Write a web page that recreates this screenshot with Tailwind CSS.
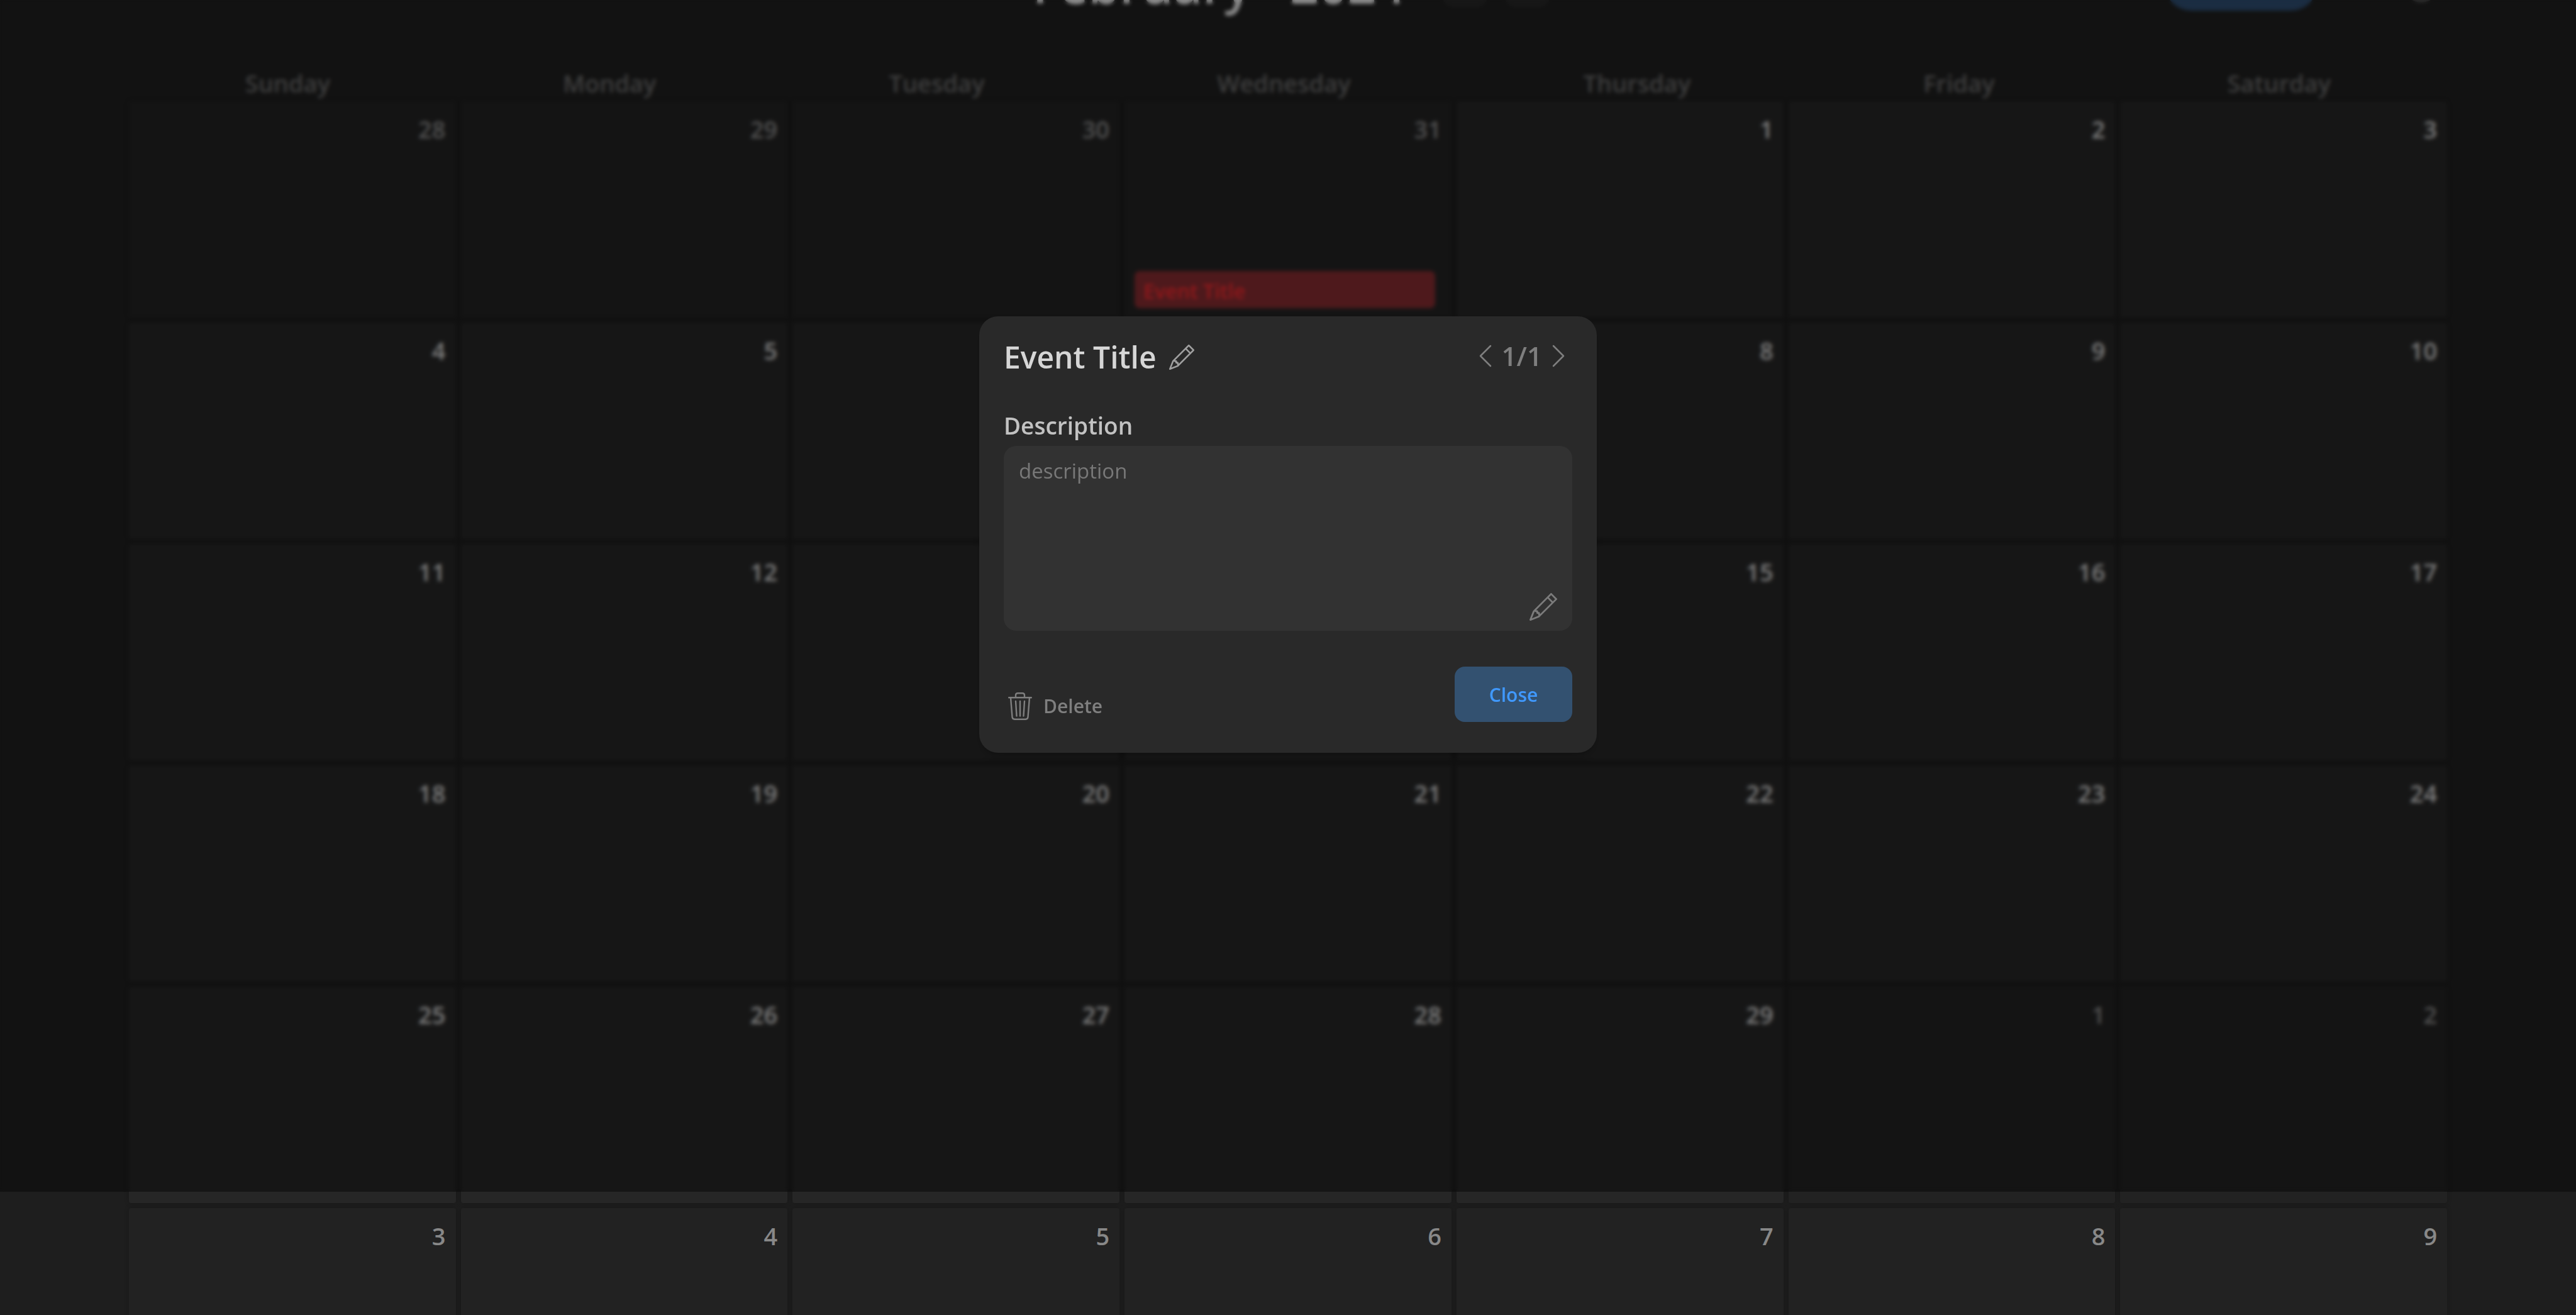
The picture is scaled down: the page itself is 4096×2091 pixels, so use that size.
<!DOCTYPE html>
<html lang="en">
<head>
<meta charset="utf-8">
<title>Calendar</title>
<script src="https://cdn.jsdelivr.net/npm/@tailwindcss/browser@4"></script>
</head>
<body class="relative h-screen overflow-hidden bg-[#1e1e1e] font-['Segoe_UI','Open_Sans',sans-serif] font-semibold">
<svg class="hidden">
  <symbol id="pencil" viewBox="0 0 16 16"><path fill="currentColor" d="M12.146.146a.5.5 0 0 1 .708 0l3 3a.5.5 0 0 1 0 .708l-10 10a.5.5 0 0 1-.168.11l-5 2a.5.5 0 0 1-.65-.65l2-5a.5.5 0 0 1 .11-.168zM11.207 2.5 13.5 4.793 14.793 3.5 12.5 1.207zm1.586 3L10.500 3.207 4 9.707V10h.5a.5.5 0 0 1 .5.5v.5h.5a.5.5 0 0 1 .5.5v.5h.293zm-9.761 5.175-.106.106-1.528 3.821 3.821-1.528.106-.106A.5.5 0 0 1 5 12.500V12h-.5a.5.5 0 0 1-.5-.5V11h-.5a.5.5 0 0 1-.468-.325"/></symbol>
</svg>

<header class="mx-[5%] -mt-[90px] grid h-[130px] grid-cols-[1fr_auto_1fr] items-center">
  <span></span>
  <div class="flex items-center pl-2.5">
    <h1 class="flex gap-[62px] text-[80px] leading-[106px] text-[#e8e8e8]"><span>February</span><span>2024</span></h1>
    <div class="ml-[60px] flex gap-7">
      <button aria-label="Previous month" class="size-[71px] rounded-2xl bg-[#272727]"></button>
      <button aria-label="Next month" class="size-[71px] rounded-2xl bg-[#272727]"></button>
    </div>
  </div>
  <div class="flex items-center justify-end gap-[136px] pr-3">
    <button aria-label="Add event" class="h-[84px] w-[243px] rounded-full bg-[#2d4b6e]"></button>
    <button aria-label="Settings" class="size-[58px] rounded-full bg-[#4c4c4c]"></button>
  </div>
</header>

<main class="mx-[5%]">
  <div id="weekdays" class="flex h-[121px] items-end justify-around pb-[3px] text-[38px] leading-[52px] text-[#686868]"></div>
  <div id="days" class="grid grid-cols-7 gap-2"></div>
</main>

<div class="absolute inset-x-0 top-0 bottom-[196px] flex items-start justify-center bg-black/40 pt-[503px] backdrop-blur-[3px]">
  <section role="dialog" aria-labelledby="event-title" class="w-[982px] rounded-[30px] bg-[#292929] px-[39px] pt-[33px] pb-[49px] shadow-lg shadow-black/20">
    <div class="flex items-start justify-between">
      <div class="flex items-center gap-5">
        <h2 id="event-title" class="text-[48px] leading-[64px] text-[#d6d6d6]">Event Title</h2>
        <button aria-label="Edit title" class="text-[#a0a0a0]"><svg class="size-10"><use href="#pencil"/></svg></button>
      </div>
      <div class="flex items-center gap-4 pr-3 text-[42px] leading-[60px] text-[#7f7f7f]">
        <button aria-label="Previous event"><svg class="h-9 w-5" viewBox="0 0 20 36" fill="none" stroke="currentColor" stroke-width="2.500" stroke-linecap="round" stroke-linejoin="round"><path d="M18 2 2 18l16 16"/></svg></button>
        <span>1/1</span>
        <button aria-label="Next event"><svg class="h-9 w-5" viewBox="0 0 20 36" fill="none" stroke="currentColor" stroke-width="2.500" stroke-linecap="round" stroke-linejoin="round"><path d="m2 2 16 16L2 34"/></svg></button>
      </div>
    </div>
    <label for="description" class="mt-[49px] mb-1 block text-[37px] leading-[56px] text-[#c2c2c2]">Description</label>
    <div class="relative">
      <textarea id="description" placeholder="description" class="block h-[294px] w-full resize-none rounded-[20px] bg-[#323232] px-6 py-4 text-[33px] leading-[48px] font-normal placeholder:text-[#787878]"></textarea>
      <button aria-label="Edit description" class="absolute right-6 bottom-4 text-[#7c7c7c]"><svg class="size-11"><use href="#pencil"/></svg></button>
    </div>
    <div class="mt-[57px] flex items-start justify-between">
      <button class="mt-[41px] flex items-center gap-[18px] pl-[7px] text-[30px] leading-[44px] text-[#7f7f7f]">
        <svg class="h-11 w-[38px]" viewBox="0 0 38 44" fill="none" stroke="currentColor" stroke-width="2.400" stroke-linecap="round" stroke-linejoin="round"><path d="M1.200 8.200h35.600M4 8.200l2.500 31q.3 3.500 3.800 3.500h17.400q3.500 0 3.800-3.500l2.500-31M12 8V4.500q0-3.300 3.300-3.300h7.400q3.300 0 3.300 3.300V8M12 14l1.500 23.500M19 14v23.500M26 14l-1.500 23.500"/></svg>
        Delete
      </button>
      <button class="h-[88px] w-[187px] rounded-2xl bg-[#335170] text-[30px] text-[#4099ff]">Close</button>
    </div>
  </section>
</div>

<script>
  const names = ['Sunday','Monday','Tuesday','Wednesday','Thursday','Friday','Saturday'];
  document.getElementById('weekdays').innerHTML = names.map(n => `<span>${n}</span>`).join('');
  const start = new Date(2024, 0, 28);
  let html = '';
  for (let i = 0; i < 42; i++) {
    const d = new Date(start.getFullYear(), start.getMonth(), start.getDate() + i);
    const tone = d.getMonth() === 1 ? 'bg-[#262626] text-[#d0d0d0]' : 'bg-[#222222] text-[#888888]';
    const event = i === 3 ? '<a href="#event-title" class="mr-2.5 block h-[59px] rounded-lg bg-[#822b2f] px-3.5 text-left text-[32px] leading-[64px] text-[#f0282e]">Event Title</a>' : '';
    html += `<article class="flex h-[344px] flex-col justify-between rounded-sm px-4 pt-[18px] pb-[15px] text-right text-[38px] leading-[52px] shadow-[0_0_8px] shadow-black/20 ${tone}"><time>${d.getDate()}</time>${event}</article>`;
  }
  document.getElementById('days').innerHTML = html;
</script>
</body>
</html>
